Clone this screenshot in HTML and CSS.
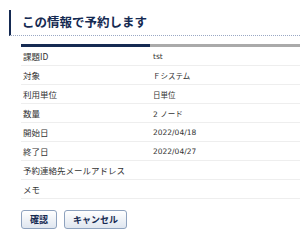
FILE: index.html
```html
<!DOCTYPE html>
<html lang="ja">
<head>
    <meta charset="UTF-8">
    <title>予約確認</title>
    <link rel="stylesheet" href="styles.css">
</head>
<body>
    <div class="container">
        <h1>この情報で予約します</h1>

        <div class="confirm">
            <div class="tabline">
                <span class="tab-on"></span>
                <span class="tab-off"></span>
            </div>

            <table class="info">
                <tr><th>課題ID</th><td>tst</td></tr>
                <tr><th>対象</th><td>Ｆシステム</td></tr>
                <tr><th>利用単位</th><td>日単位</td></tr>
                <tr><th>数量</th><td>2 ノード</td></tr>
                <tr><th>開始日</th><td>2022/04/18</td></tr>
                <tr><th>終了日</th><td>2022/04/27</td></tr>
                <tr><th>予約連絡先メールアドレス</th><td></td></tr>
                <tr><th>メモ</th><td></td></tr>
            </table>

            <div class="buttons">
                <button type="button">確認</button>
                <button type="button">キャンセル</button>
            </div>
        </div>
    </div>
</body>
</html>
```

FILE: styles.css
```css
body {
    margin: 0;
    padding: 0;
    font-family: "DejaVu Sans", "Noto Sans CJK JP", sans-serif;
    color: #333;
    background: #fff;
}

.container {
    padding-top: 10px;
}

.container h1 {
    margin: 0 0 0 9px;
    height: 25px;
    line-height: 24px;
    padding-left: 11px;
    border-left: 2px solid #152a52;
    border-bottom: 1px dotted #9aa8c4;
    font-family: "Noto Sans CJK JP", sans-serif;
    font-size: 12.5px;
    font-weight: bold;
    color: #152a52;
}

.confirm {
    margin-left: 21px;
    margin-top: 8px;
}

.tabline {
    display: flex;
    height: 3px;
}

.tab-on {
    width: 129px;
    background-color: #152a52;
}

.tab-off {
    flex: 1;
    background-color: #aaaaaa;
}

.info {
    width: 100%;
    border-collapse: collapse;
}

.info th,
.info td {
    height: 18px;
    padding: 0;
    border-bottom: 1px solid #eeeeee;
    text-align: left;
    vertical-align: middle;
}

.info th {
    width: 130px;
    padding-left: 2px;
    font-family: "Noto Sans CJK JP", sans-serif;
    font-size: 8.5px;
    font-weight: normal;
    color: #333;
}

.info td {
    font-size: 7.5px;
    color: #333;
}

.buttons {
    display: flex;
    gap: 7px;
    margin-top: 11px;
}

.buttons button {
    height: 19px;
    padding: 0 8px;
    border: 1px solid #8ea2be;
    border-radius: 3px;
    background: linear-gradient(#ffffff, #dfe6ef);
    font-family: "Noto Sans CJK JP", sans-serif;
    font-size: 9px;
    font-weight: bold;
    color: #152a52;
    cursor: pointer;
}
```
